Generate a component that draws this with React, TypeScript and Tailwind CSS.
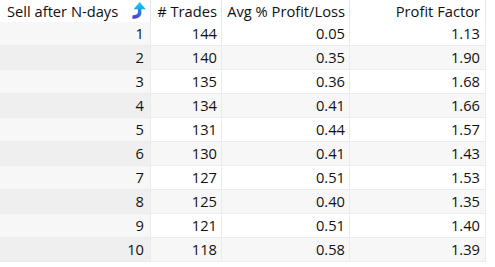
const rows = [
  [1, 144, '0.05', '1.13'],
  [2, 140, '0.35', '1.90'],
  [3, 135, '0.36', '1.68'],
  [4, 134, '0.41', '1.66'],
  [5, 131, '0.44', '1.57'],
  [6, 130, '0.41', '1.43'],
  [7, 127, '0.51', '1.53'],
  [8, 125, '0.40', '1.35'],
  [9, 121, '0.51', '1.40'],
  [10, 118, '0.58', '1.39'],
];

function SortIcon() {
  return (
    <svg width="18" height="20" viewBox="0 0 16 18" className="shrink-0">
      <defs>
        <linearGradient id="tail" x1="0" y1="1" x2="1" y2="0">
          <stop offset="0" stopColor="#5b2bd6" />
          <stop offset="1" stopColor="#1e8fe8" />
        </linearGradient>
        <linearGradient id="head" x1="0" y1="0" x2="0" y2="1">
          <stop offset="0" stopColor="#14d4e8" />
          <stop offset="1" stopColor="#1aa7e6" />
        </linearGradient>
      </defs>
      <path d="M11 7 L11 11 C11 14 8 16 3 16 L3 13 C6 13 8 12 8 10 L8 7 Z" fill="url(#tail)" />
      <path d="M9.5 1 L15 7.5 L4 7.5 Z" fill="url(#head)" />
    </svg>
  );
}

export default function App() {
  return (
    <div className="w-[495px] h-[267px] bg-white text-[#111] text-[14.7px] font-['Open_Sans',sans-serif] overflow-hidden">
      <div className="flex h-[22px] items-center">
        <div className="w-[151px] h-full flex items-center justify-between pl-[7px] pr-[3px] border-r border-[#e5e5e5]">
          <span>Sell after N-days</span>
          <SortIcon />
        </div>
        <div className="w-[71px] h-full flex items-center justify-end pr-[4px] border-r border-[#e5e5e5]"># Trades</div>
        <div className="w-[128px] h-full flex items-center justify-end pr-[4px] border-r border-[#e5e5e5]">Avg % Profit/Loss</div>
        <div className="w-[136px] h-full flex items-center justify-end pr-[5px] border-r border-[#e5e5e5]">Profit Factor</div>
        <div className="flex-1" />
      </div>
      {rows.map((r, i) => {
        const even = i % 2 === 1;
        return (
          <div key={i} className="flex h-[24px]">
            <div className={`w-[151px] flex items-center justify-end pr-[6px] border-r border-b border-[#ebebeb] ${even ? 'bg-[#efefef]' : 'bg-[#f7f7f7]'}`}>{r[0]}</div>
            <div className={`w-[71px] flex items-center justify-end pr-[4px] border-r border-b border-[#ebebeb] ${even ? 'bg-[#f7f7f7]' : 'bg-white'}`}>{r[1]}</div>
            <div className={`w-[128px] flex items-center justify-end pr-[4px] border-r border-b border-[#ebebeb] ${even ? 'bg-[#f7f7f7]' : 'bg-white'}`}>{r[2]}</div>
            <div className={`w-[136px] flex items-center justify-end pr-[5px] border-r border-b border-[#ebebeb] ${even ? 'bg-[#f7f7f7]' : 'bg-white'}`}>{r[3]}</div>
            <div className="flex-1" />
          </div>
        );
      })}
    </div>
  );
}
